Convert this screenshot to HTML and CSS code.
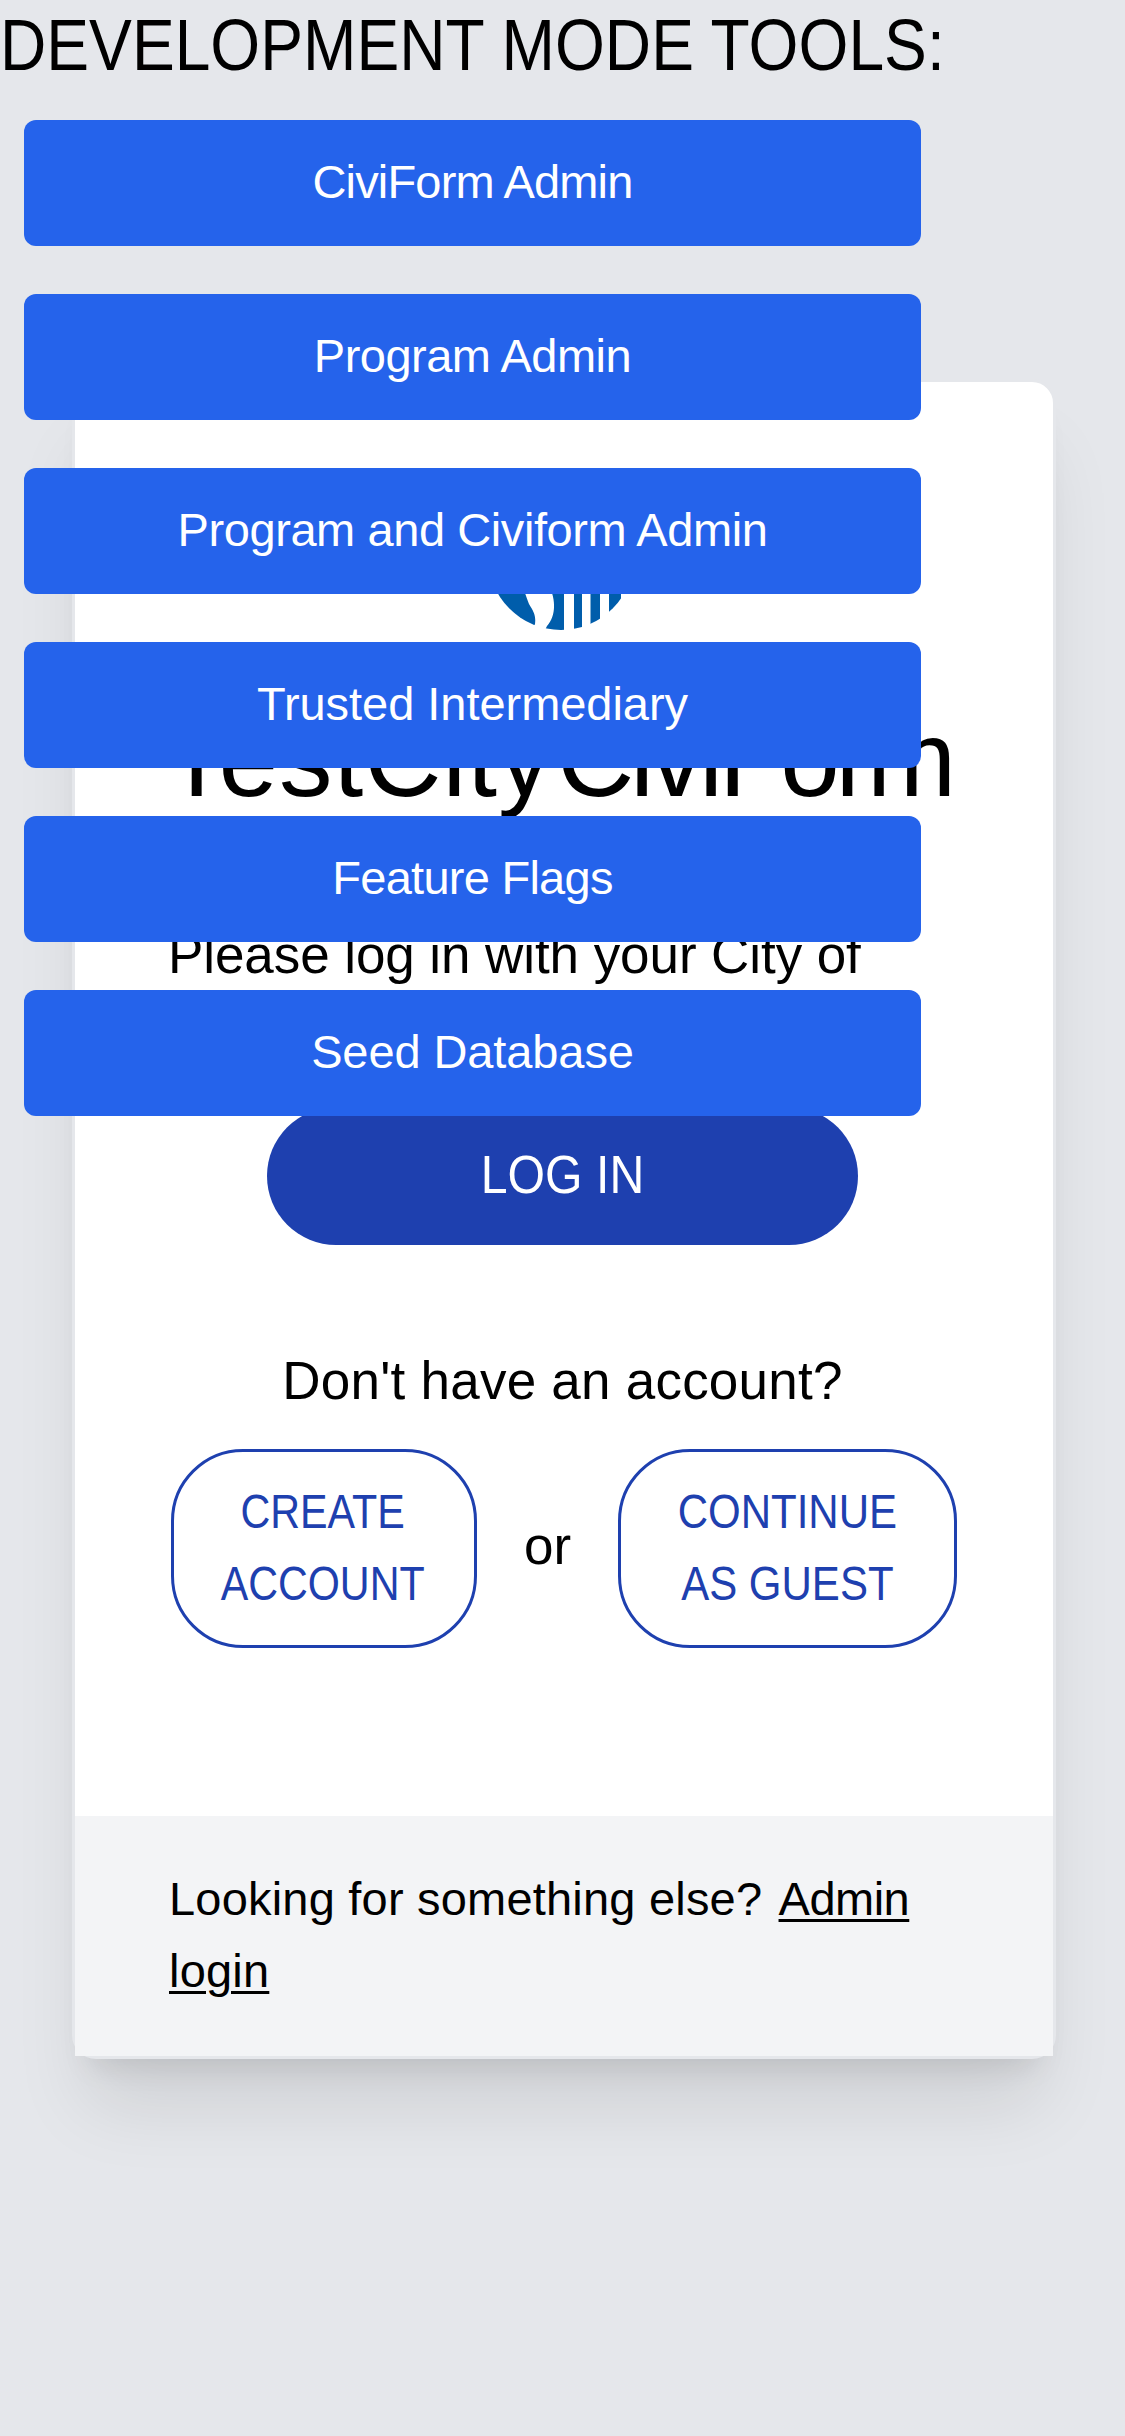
FILE: index.html
```html
<!DOCTYPE html>
<html lang="en">
<head>
<meta charset="utf-8">
<title>TestCity CiviForm</title>
<link rel="stylesheet" href="styles.css">
</head>
<body>
<main class="card">
  <section class="content">
    <svg class="logo" viewBox="0 0 146 146" aria-hidden="true">
      <defs><clipPath id="seal"><circle cx="73" cy="73" r="73"/></clipPath></defs>
      <g clip-path="url(#seal)" fill="#005dab">
        <path d="M0 0H44C30 30 26 70 36 106Q39 115 41 120C46 128 48 132 47 140L44 146H0Z"/>
        <path d="M76 0V146H57L59 142C66 134 68 122 64 109C64 88 50 40 60 0Z"/>
        <path d="M86 0H94V146H86ZM102.500 0H112V146H102.500ZM121 0H133V146H121Z"/>
      </g>
    </svg>
    <h1 class="title"><span class="city">TestCity</span> <span class="product">CiviForm</span></h1>
    <p class="intro">Please log in with your City of</p>
    <button class="login"><span>LOG IN</span></button>
    <p class="question">Don't have an account?</p>
    <div class="choices">
      <button class="outline create"><span>CREATE</span><span>ACCOUNT</span></button>
      <span class="or">or</span>
      <button class="outline guest"><span>CONTINUE</span><span>AS GUEST</span></button>
    </div>
  </section>
  <footer class="footer">Looking for something else? <a class="link" href="#">Admin <span class="last">login</span></a></footer>
</main>
<aside class="tools">
  <p class="tools-title">DEVELOPMENT MODE TOOLS:</p>
  <div class="tools-list">
    <button class="tool t1">CiviForm Admin</button>
    <button class="tool t2">Program Admin</button>
    <button class="tool t3">Program and Civiform Admin</button>
    <button class="tool t4">Trusted Intermediary</button>
    <button class="tool t5">Feature Flags</button>
    <button class="tool t6">Seed Database</button>
  </div>
</aside>
</body>
</html>
```
FILE: styles.css
```css
* { box-sizing: border-box; margin: 0; padding: 0; }
body {
  min-height: 2436px;
  padding: 379px 69px 0 72px;
  overflow: hidden;
  background: #e5e7eb;
  color: #000;
  font: 47px/72px "Liberation Sans", Arial, sans-serif;
}
button { border: 0; font: inherit; color: inherit; white-space: nowrap; }

.card {
  height: 1680px;
  background: #fff;
  border: 3px solid #e5e7eb;
  border-radius: 24px;
  box-shadow: 0 60px 75px -15px rgba(0,0,0,.1), 0 24px 30px -18px rgba(0,0,0,.1);
}
.content {
  height: 1434px;
  padding: 102px 96px 0 93px;
  display: flex;
  flex-direction: column;
  align-items: center;
}
.logo { display: block; width: 146px; height: 146px; margin-right: 3px; flex: none; }
.title {
  align-self: flex-start;
  display: flex;
  margin: 75px 0 0 -4px;
  font-size: 107px;
  line-height: 108px;
  font-weight: 400;
  white-space: nowrap;
}
.city { width: 393px; letter-spacing: 1px; }
.product { letter-spacing: -4.1px; }
.intro {
  align-self: stretch;
  margin-top: 100px;
  font-size: 53px;
  line-height: 84px;
  letter-spacing: -.08px;
}
.login {
  width: 591px;
  height: 138px;
  margin-top: 110px;
  padding-bottom: 5px;
  border-radius: 72px;
  background: #1e40af;
  color: #fff;
  font-size: 54px;
  line-height: 84px;
}
.login span { display: inline-block; transform: scaleX(.893); }
.question {
  margin-top: 94px;
  font-size: 53px;
  line-height: 84px;
  letter-spacing: .23px;
}
.choices {
  align-self: stretch;
  margin: 26px 0 0 3px;
  display: flex;
  align-items: center;
}
.outline {
  height: 199px;
  padding-bottom: 2px;
  border: 3px solid #1e40af;
  border-radius: 72px;
  background: #fff;
  color: #1e40af;
  font-size: 48px;
  display: flex;
  flex-direction: column;
  align-items: center;
  justify-content: center;
}
.create { width: 306px; padding-right: 2px; }
.create span { transform: scaleX(.859); }
.guest { width: 339px; }
.guest span { transform: scaleX(.875); }
.or {
  width: 141px;
  padding-bottom: 5px;
  text-align: center;
  line-height: 84px;
  font-size: 53px;
}
.footer {
  height: 240px;
  padding: 47px 93px 47px 94px;
  background: #f3f4f6;
  letter-spacing: .2px;
}
.link {
  margin-left: 3px;
  color: #000;
  letter-spacing: -.5px;
  text-decoration: underline;
  text-decoration-thickness: 3px;
  text-underline-offset: 4px;
}
.last { letter-spacing: .2px; }

.tools { position: absolute; top: 0; left: 0; width: 945px; }
.tools-title {
  font-size: 72px;
  line-height: 90px;
  white-space: nowrap;
  transform: scaleX(.891);
  transform-origin: left;
}
.tools-list { padding: 30px 24px 0; display: flex; flex-direction: column; gap: 48px; }
.tool {
  height: 126px;
  padding-bottom: 3px;
  border-radius: 12px;
  background: #2563eb;
  color: #fff;
}
.t1 { letter-spacing: -.83px; }
.t2 { letter-spacing: -.5px; }
.t3 { letter-spacing: -.42px; }
.t4 { letter-spacing: -.04px; }
.t5 { letter-spacing: -.74px; }
.t6 { letter-spacing: -.1px; }
```
